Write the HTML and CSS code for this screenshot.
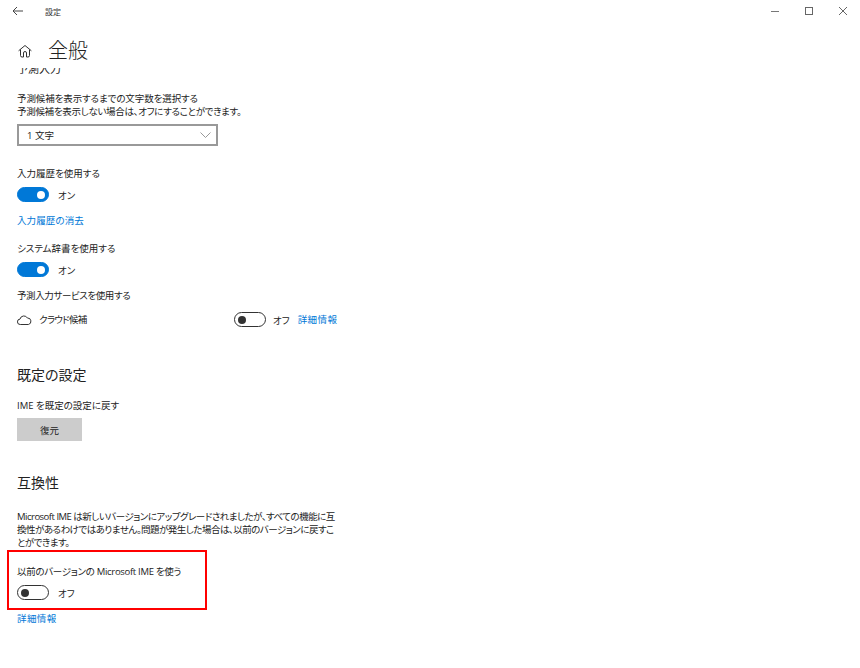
FILE: index.html
```html
<!DOCTYPE html>
<html lang="ja">

<head>
  <meta charset="UTF-8" />
  <link rel="stylesheet" href="styles.css">
  <title>設定</title>
</head>

<body>
  <div class="titlebar">
    <svg class="back" width="12" height="10" viewBox="0 0 12 10">
      <path d="M11 5H1.200M5 1L1 5l4 4" fill="none" stroke="#444" stroke-width="1" />
    </svg>
    <span class="app-name">設定</span>
    <div class="window-buttons">
      <svg width="10" height="10" viewBox="0 0 10 10">
        <path d="M1 5.500h8" stroke="#777" stroke-width="1" />
      </svg>
      <svg width="10" height="10" viewBox="0 0 10 10">
        <rect x="1.500" y="1.500" width="7" height="7" fill="none" stroke="#666" stroke-width="1" />
      </svg>
      <svg width="10" height="10" viewBox="0 0 10 10">
        <path d="M1 1l8 8M9 1L1 9" stroke="#666" stroke-width="1" />
      </svg>
    </div>
  </div>

  <div class="page-header">
    <svg class="home" width="14" height="14" viewBox="0 0 14 14">
      <path d="M.6 6.800L7 1.500l6.400 5.300M2.500 5.500v6a1.500 1.500 0 0 0 1.500 1.500h1.500V9a1.500 1.500 0 0 1 3 0v4H10a1.500 1.500 0 0 0 1.500-1.500v-6" fill="none" stroke="#333" stroke-width="1" />
    </svg>
    <h1>全般</h1>
  </div>

  <main class="content">
    <h3 class="clipped">予測入力</h3>

    <p class="text first"><span class="tight-1">予測候補を表示するまでの文字数を選択する</span><br><span class="tight-3">予測候補を表示しない場合は、オフにすることができます。</span></p>
    <div class="select">
      <span>1 文字</span>
      <svg width="11" height="6" viewBox="0 0 11 6">
        <path d="M.5 .5l5 5 5-5" fill="none" stroke="#999" stroke-width="1" />
      </svg>
    </div>

    <p class="text label-history">入力履歴を使用する</p>
    <div class="toggle-row">
      <span class="toggle on"></span>
      <span class="state">オン</span>
    </div>
    <a class="link history-link">入力履歴の消去</a>

    <p class="text label-dict">システム辞書を使用する</p>
    <div class="toggle-row">
      <span class="toggle on"></span>
      <span class="state">オン</span>
    </div>

    <p class="text label-service"><span class="tight-4">予測入力サービスを使用する</span></p>
    <div class="service-row">
      <div class="service-name">
        <svg width="15" height="10" viewBox="0 0 15 10">
          <path d="M4 9.500H3.300a2.700 2.700 0 0 1-.3-5.400A4 4 0 0 1 10.400 3a3.300 3.300 0 0 1 1 6.500z" fill="none" stroke="#333" stroke-width="1" />
        </svg>
        <span class="text tight-7">クラウド候補</span>
      </div>
      <span class="toggle"></span>
      <span class="state">オフ</span>
      <a class="link">詳細情報</a>
    </div>

    <h2 class="defaults">既定の設定</h2>
    <p class="text label-ime">IME を既定の設定に戻す</p>
    <button class="restore">復元</button>

    <h2 class="compat">互換性</h2>
    <p class="text compat-text">Microsoft IME は新しいバージョンにアップグレードされましたが、すべての機能に互<br>換性があるわけではありません。問題が発生した場合は、以前のバージョンに戻すこ<br>とができます。</p>

    <div class="highlight">
      <p class="text"><span class="tight-3">以前のバージョンの Microsoft IME を使う</span></p>
      <div class="toggle-row">
        <span class="toggle"></span>
        <span class="state">オフ</span>
      </div>
    </div>
    <a class="link more-link">詳細情報</a>
  </main>
</body>

</html>
```

FILE: styles.css
```css
* {
  box-sizing: border-box;
}

html,
body {
  height: 100%;
}

body {
  margin: 0;
  background-color: white;
  color: #222;
  font-family: "Open Sans", "Noto Sans CJK JP", sans-serif;
  font-size: 9.500px;
  font-feature-settings: "palt";
  overflow: hidden;
}

.titlebar {
  display: flex;
  align-items: center;
  height: 22px;
  padding-left: 12px;
}

.app-name {
  margin-left: 21px;
  font-size: 8px;
  color: #333;
}

.window-buttons {
  display: flex;
  gap: 24px;
  margin-left: auto;
  padding-right: 12px;
}

.page-header {
  display: flex;
  align-items: center;
  height: 46px;
  padding: 12px 0 0 18px;
}

.page-header h1 {
  margin: 0 0 0 16px;
  font-size: 20px;
  font-weight: 300;
  line-height: 1;
  color: #222;
}

.content {
  height: 600px;
  padding: 0 0 0 17px;
  overflow: hidden;
}

h2 {
  margin: 0;
  font-size: 14px;
  font-weight: 400;
  line-height: 20px;
}

.clipped {
  margin: -7px 0 0;
  font-size: 11px;
  font-weight: 400;
  line-height: 16px;
}

.text {
  margin: 0;
  width: 325px;
  line-height: 13px;
}

.tight-1 {
  letter-spacing: -0.1px;
}

.tight-3 {
  letter-spacing: -0.3px;
}

.tight-4 {
  letter-spacing: -0.4px;
}

.tight-7 {
  letter-spacing: -0.7px;
}

.first {
  margin-top: 15px;
}

.select {
  display: flex;
  align-items: center;
  justify-content: space-between;
  width: 201px;
  height: 22px;
  margin-top: 6px;
  padding: 0 5px 0 8px;
  border: 2px solid #999;
}

.toggle-row {
  display: flex;
  align-items: center;
  gap: 9px;
  height: 15px;
  margin-top: 7px;
}

.toggle {
  display: flex;
  align-items: center;
  flex: none;
  width: 32px;
  height: 15px;
  padding: 0 3px;
  border: 1.500px solid #333;
  border-radius: 8px;
}

.toggle::after {
  content: "";
  width: 8px;
  height: 8px;
  border-radius: 50%;
  background-color: #333;
}

.toggle.on {
  justify-content: flex-end;
  border-color: #0078d7;
  background-color: #0078d7;
}

.toggle.on::after {
  background-color: white;
}

.link {
  display: block;
  color: #0078d7;
  letter-spacing: 0.4px;
  line-height: 13px;
}

.label-history {
  margin-top: 21px;
}

.history-link {
  margin-top: 12px;
  letter-spacing: 0.1px;
}

.label-dict {
  margin-top: 15px;
}

.label-service {
  margin-top: 12px;
}

.service-row {
  display: flex;
  align-items: center;
  height: 15px;
  margin-top: 10px;
}

.service-name {
  display: flex;
  align-items: center;
  gap: 7px;
  width: 217px;
}

.service-name .text {
  width: auto;
}

.service-row .state {
  margin-left: 7px;
}

.service-row .link {
  margin-left: 8px;
}

.defaults {
  margin-top: 38px;
}

.label-ime {
  margin-top: 14px;
}

.restore {
  display: block;
  width: 65px;
  height: 23px;
  margin-top: 6px;
  padding: 0;
  border: none;
  background-color: #ccc;
  color: #222;
  font: inherit;
}

.compat {
  margin-top: 32px;
}

.compat-text {
  margin-top: 17px;
  width: 330px;
  letter-spacing: -0.5px;
}

.highlight {
  width: 200px;
  height: 60px;
  margin: 1px 0 0 -10px;
  padding: 13px 0 0 10px;
  border: 2.500px solid #f00;
}

.highlight .text {
  width: auto;
  margin-left: -2px;
}

.highlight .toggle-row {
  margin-left: -2px;
  margin-top: 7px;
}

.more-link {
  margin-top: 2px;
}
```
